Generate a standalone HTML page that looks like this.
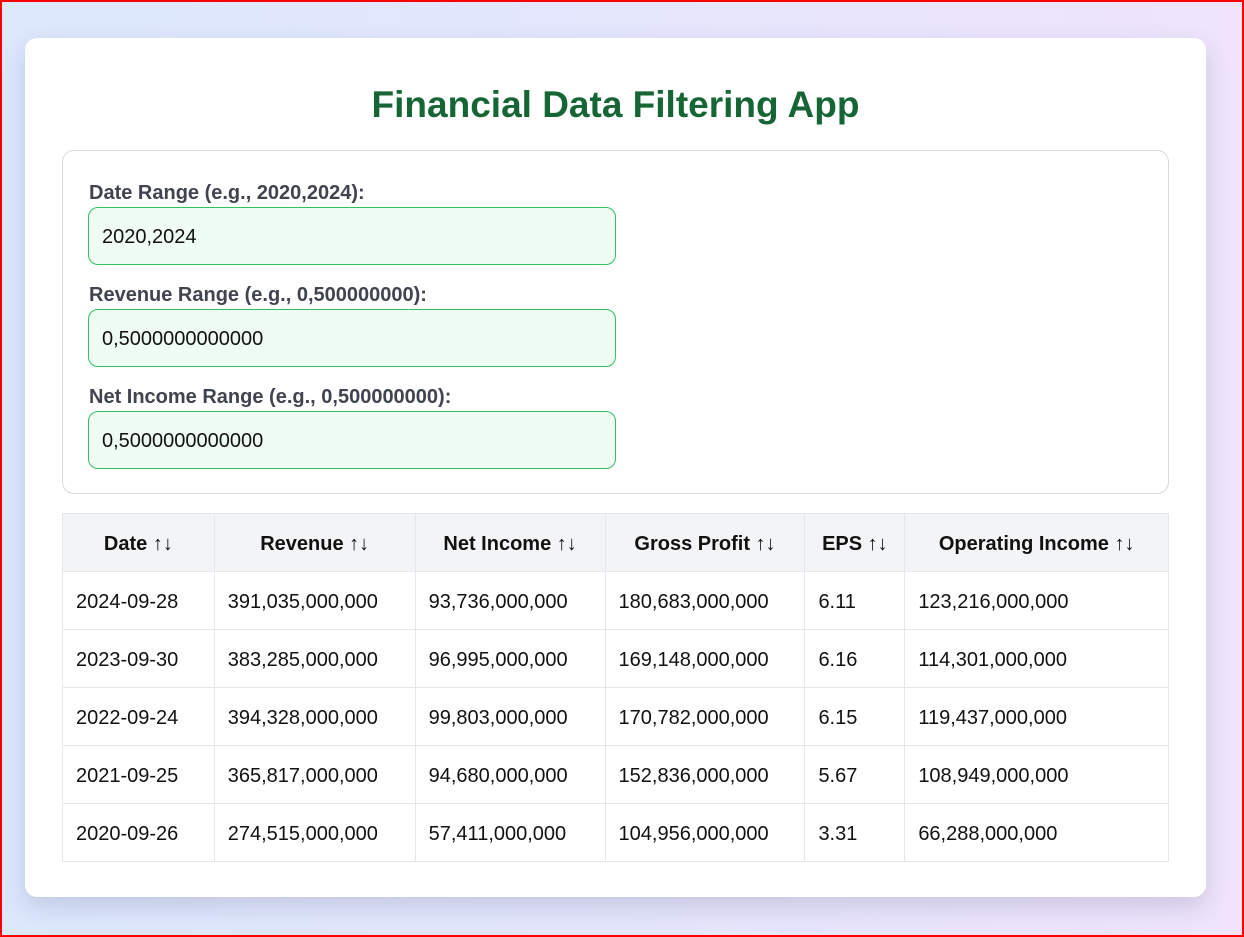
<!DOCTYPE html>
<html><head><meta charset="utf-8"><style>
*{box-sizing:border-box;margin:0;padding:0}
html,body{width:1244px;height:937px;overflow:hidden}
body{background:linear-gradient(90deg,#dce8fc,#e4e6fc 50%,#efe4fc);border:2px solid #f00;font-family:"Liberation Sans",sans-serif;position:relative}
.card{position:absolute;left:23px;top:36px;width:1181px;height:859px;background:#fff;border-radius:12px;box-shadow:0 10px 25px rgba(60,60,110,.18)}
h1{position:absolute;left:0;right:0;top:45px;text-align:center;font-size:37px;font-weight:bold;color:#166534;line-height:44px}
.filters{position:absolute;left:37px;top:112px;width:1107px;height:344px;border:1px solid #d6d9de;border-radius:12px}
.lbl{position:absolute;left:26px;font-size:20px;font-weight:bold;color:#3f4450;line-height:24px}
.inp{position:absolute;left:25px;width:528px;height:58px;background:#effcf3;border:1px solid #2fc25f;border-radius:10px;font-size:20px;color:#111;padding-left:13px;line-height:58px}
table{position:absolute;left:37px;top:475px;border-collapse:collapse;width:1107px;font-size:20px;color:#111}
td,th{border:1px solid #e5e7eb;height:58px;padding:3px 13px 0;text-align:left;font-weight:normal}
th{background:#f3f4f6;font-weight:bold;text-align:center}
</style></head><body>
<div class="card">
<h1>Financial Data Filtering App</h1>
<div class="filters">
<div class="lbl" style="top:30px">Date Range (e.g., 2020,2024):</div>
<div class="inp" style="top:56px">2020,2024</div>
<div class="lbl" style="top:132px">Revenue Range (e.g., 0,500000000):</div>
<div class="inp" style="top:158px">0,5000000000000</div>
<div class="lbl" style="top:234px">Net Income Range (e.g., 0,500000000):</div>
<div class="inp" style="top:260px">0,5000000000000</div>
</div>
<table>
<colgroup><col style="width:152px"><col style="width:201px"><col style="width:190px"><col style="width:200px"><col style="width:100px"><col style="width:264px"></colgroup>
<tr><th>Date ↑↓</th><th>Revenue ↑↓</th><th>Net Income ↑↓</th><th>Gross Profit ↑↓</th><th>EPS ↑↓</th><th>Operating Income ↑↓</th></tr>
<tr><td>2024-09-28</td><td>391,035,000,000</td><td>93,736,000,000</td><td>180,683,000,000</td><td>6.11</td><td>123,216,000,000</td></tr>
<tr><td>2023-09-30</td><td>383,285,000,000</td><td>96,995,000,000</td><td>169,148,000,000</td><td>6.16</td><td>114,301,000,000</td></tr>
<tr><td>2022-09-24</td><td>394,328,000,000</td><td>99,803,000,000</td><td>170,782,000,000</td><td>6.15</td><td>119,437,000,000</td></tr>
<tr><td>2021-09-25</td><td>365,817,000,000</td><td>94,680,000,000</td><td>152,836,000,000</td><td>5.67</td><td>108,949,000,000</td></tr>
<tr><td>2020-09-26</td><td>274,515,000,000</td><td>57,411,000,000</td><td>104,956,000,000</td><td>3.31</td><td>66,288,000,000</td></tr>
</table>
</div>
</body></html>
